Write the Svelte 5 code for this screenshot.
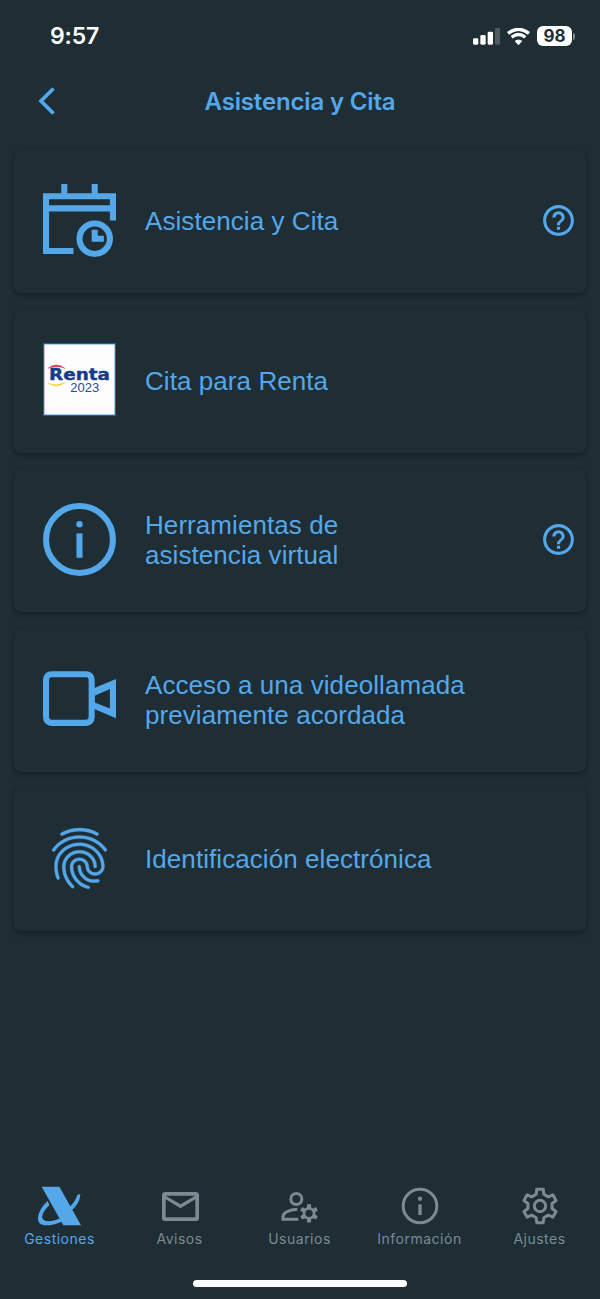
<script lang="ts">
  type Item = {
    icon: string;
    lines: string[];
    help?: boolean;
  };

  const items: Item[] = [
    { icon: 'calendar', lines: ['Asistencia y Cita'], help: true },
    { icon: 'renta', lines: ['Cita para Renta'] },
    { icon: 'info', lines: ['Herramientas de', 'asistencia virtual'], help: true },
    { icon: 'video', lines: ['Acceso a una videollamada', 'previamente acordada'] },
    { icon: 'fingerprint', lines: ['Identificación electrónica'] },
  ];

  const tabs = [
    { id: 'gestiones', name: 'Gestiones' },
    { id: 'avisos', name: 'Avisos' },
    { id: 'usuarios', name: 'Usuarios' },
    { id: 'informacion', name: 'Información' },
    { id: 'ajustes', name: 'Ajustes' },
  ];

  let active = $state('gestiones');

  // six-toothed cog around 0,0
  function gear(outer: number, inner: number, tip: number, base: number) {
    const points: string[] = [];
    for (let i = 0; i < 6; i++) {
      for (const [r, a] of [[inner, -base], [outer, -tip], [outer, tip], [inner, base]]) {
        const angle = ((i * 60 + a - 90) * Math.PI) / 180;
        points.push(`${(r * Math.cos(angle)).toFixed(2)} ${(r * Math.sin(angle)).toFixed(2)}`);
      }
    }
    return `M${points.join('L')}Z`;
  }
</script>

<div class="screen">
  <div class="status">
    <span class="time">9:57</span>
    <div class="indicators">
      <svg class="signal" viewBox="0 0 81 51">
        <rect x="0" y="31" width="16" height="19" rx="4" />
        <rect x="22" y="21" width="16" height="29" rx="4" />
        <rect x="44" y="11" width="16" height="39" rx="4" />
        <rect x="66" y="0" width="15" height="50" rx="4" opacity=".22" />
      </svg>
      <svg class="wifi" viewBox="0 0 69 51">
        <path d="M3 16Q34.500-8 66 16" />
        <path d="M14 28Q34.500 11 55 28" />
        <path class="dot" d="M23 39Q34.500 30 46 39L36.500 49.500Q34.500 52 32.500 49.500Z" />
      </svg>
      <span class="battery">98</span>
      <span class="knob"></span>
    </div>
  </div>

  <header>
    <button class="back" aria-label="Atrás">
      <svg viewBox="0 0 18 30"><path d="M15.500 2.500 3 15l12.500 12.500" /></svg>
    </button>
    <h1>Asistencia y Cita</h1>
  </header>

  <main>
    {#each items as item}
      <div class="card">
        <div class="picture">
          {#if item.icon === 'calendar'}
            <svg viewBox="0 0 24 24">
              <path fill-rule="evenodd" d="M6 0h2v3h8V0h2v3h6v9h-2V9H2v12h8v2H0V3h6zM2 5v2h20V5z" />
              <circle class="line" cx="17" cy="18" r="5" />
              <path d="M16 15h2v2h2v2h-4z" />
            </svg>
          {:else if item.icon === 'renta'}
            <svg class="renta" viewBox="0 0 72 72">
              <rect x=".6" y=".6" width="70.800" height="70.800" />
              <path class="red" d="M5 25Q13 18.500 21.500 25Q13 21.500 5 25Z" />
              <path class="yellow" d="M5 39.500Q13 45.500 22 39Q13 43 5 39.500Z" />
              <text class="brand" x="6" y="36.800" textLength="60" lengthAdjust="spacingAndGlyphs">Renta</text>
              <text class="year" x="27" y="48.500" textLength="28.500" lengthAdjust="spacingAndGlyphs">2023</text>
            </svg>
          {:else if item.icon === 'info'}
            <svg viewBox="0 0 24 24">
              <circle class="line" cx="12" cy="12" r="11" />
              <circle cx="12" cy="7" r="1.050" />
              <path d="M11 10h2v8h-2z" />
            </svg>
          {:else if item.icon === 'video'}
            <svg viewBox="0 0 24 24">
              <rect class="line" x="1" y="4" width="15" height="16" rx="1.800" />
              <path fill-rule="evenodd" d="M16.500 8.700 24 5.600v12.900l-7.500-3.200zM17 11.100v2.200l5 2V8.900z" />
            </svg>
          {:else}
            <svg class="finger" viewBox="0 0 24 24">
              <path d="M17.81 4.47c-.08 0-.16-.02-.23-.06C15.66 3.42 14 3 12.01 3c-1.98 0-3.86.47-5.57 1.41-.24.13-.54.04-.68-.2-.13-.24-.04-.55.2-.68C7.82 2.52 9.86 2 12.01 2c2.13 0 3.99.47 6.03 1.52.25.13.34.43.21.67-.09.18-.26.28-.44.28zM3.5 9.72c-.1 0-.2-.03-.29-.09-.23-.16-.28-.47-.12-.7.99-1.4 2.25-2.5 3.75-3.27C9.98 4.04 14 4.03 17.15 5.65c1.5.77 2.76 1.86 3.75 3.25.16.22.11.54-.12.7-.23.16-.54.11-.7-.12-.9-1.26-2.04-2.25-3.39-2.94-2.87-1.47-6.54-1.47-9.4.01-1.36.7-2.5 1.7-3.4 2.96-.08.14-.23.21-.39.21zm6.25 12.07c-.13 0-.26-.05-.35-.15-.87-.87-1.34-1.43-2.01-2.64-.69-1.23-1.05-2.73-1.05-4.34 0-2.97 2.54-5.39 5.66-5.39s5.66 2.42 5.66 5.39c0 .28-.22.5-.5.5s-.5-.22-.5-.5c0-2.42-2.09-4.39-4.66-4.39-2.57 0-4.66 1.97-4.66 4.39 0 1.44.32 2.77.93 3.85.64 1.15 1.08 1.64 1.85 2.42.19.2.19.51 0 .71-.11.1-.24.15-.37.15zm7.17-1.85c-1.19 0-2.24-.3-3.1-.89-1.49-1.01-2.38-2.65-2.38-4.39 0-.28.22-.5.5-.5s.5.22.5.5c0 1.41.72 2.74 1.94 3.56.71.48 1.54.71 2.54.71.24 0 .64-.03 1.04-.1.27-.05.53.13.58.41.05.27-.13.53-.41.58-.57.11-1.07.12-1.21.12zM14.91 22c-.04 0-.09-.01-.13-.02-1.59-.44-2.63-1.03-3.72-2.1-1.4-1.39-2.17-3.24-2.17-5.22 0-1.62 1.38-2.94 3.08-2.94 1.7 0 3.08 1.32 3.08 2.94 0 1.07.93 1.94 2.08 1.94s2.08-.87 2.08-1.94c0-3.77-3.25-6.83-7.25-6.83-2.84 0-5.44 1.58-6.61 4.03-.39.81-.59 1.76-.59 2.8 0 .78.07 2.01.67 3.61.1.26-.03.55-.29.64-.26.1-.55-.04-.64-.29-.49-1.31-.73-2.61-.73-3.96 0-1.2.23-2.29.68-3.24 1.33-2.79 4.28-4.6 7.51-4.6 4.55 0 8.25 3.51 8.25 7.83 0 1.62-1.38 2.94-3.08 2.94s-3.08-1.32-3.08-2.94c0-1.07-.93-1.94-2.08-1.94s-2.08.87-2.08 1.94c0 1.71.66 3.31 1.87 4.51.95.94 1.86 1.46 3.27 1.85.27.07.42.35.35.61-.05.23-.26.38-.47.38z" />
            </svg>
          {/if}
        </div>
        <p>
          {#each item.lines as line}
            <span>{line}</span>
          {/each}
        </p>
        {#if item.help}
          <button class="help" aria-label="Ayuda">
            <svg viewBox="0 0 24 24">
              <path d="M11 18h2v-2h-2v2zm1-16C6.48 2 2 6.480 2 12s4.480 10 10 10 10-4.480 10-10S17.520 2 12 2zm0 18c-4.410 0-8-3.590-8-8s3.590-8 8-8 8 3.590 8 8-3.590 8-8 8zm0-14c-2.210 0-4 1.790-4 4h2c0-1.100.9-2 2-2s2 .9 2 2c0 2-3 1.750-3 5h2c0-2.250 3-2.500 3-5 0-2.210-1.790-4-4-4z" />
            </svg>
          </button>
        {/if}
      </div>
    {/each}
  </main>

  <nav>
    {#each tabs as tab}
      <button class="tab" class:active={active === tab.id} onclick={() => (active = tab.id)}>
        <svg viewBox="-66 -66 132 132">
          {#if tab.id === 'gestiones'}
            <path d="M-55-58H-2L63 58H10Z" />
            <path d="M61-36Q60-6 32 16L26 5Q46-12 52-33Z" />
            <path d="M-37-15L-32-3Q-57 23-53 36C-48 51-22 47 0 37L5 47C-22 59-50 62-61 52C-74 38-60 5-37-15Z" />
          {:else if tab.id === 'avisos'}
            <path fill-rule="evenodd" d="M-44-42H47Q57-42 57-32V35Q57 45 47 45H-44Q-54 45-54 35V-32Q-54-42-44-42ZM-43-20V34H46V-20L1.500 7ZM-43-31L1.500-5 46-31Z" />
          {:else if tab.id === 'usuarios'}
            <circle class="line" cx="-11" cy="-21" r="16.500" />
            <path class="line" d="M-8 10C-35 11-51 21-51 32V40H-5" />
            <path fill-rule="evenodd" transform="translate(27 22)" d="{gear(28, 19, 12, 20)}M11 0A11 11 0 1 0-11 0A11 11 0 1 0 11 0Z" />
          {:else if tab.id === 'informacion'}
            <circle class="line" r="50.500" />
            <circle cy="-22" r="6.500" />
            <rect x="-5" y="-5" width="10" height="32" />
          {:else}
            <path class="line" d={gear(51, 37, 11, 18)} stroke-linejoin="round" />
            <circle class="line" r="17" />
          {/if}
        </svg>
        <span>{tab.name}</span>
      </button>
    {/each}
  </nav>
  <div class="home"></div>
</div>

<style>
  :global(body) { background: #1f2d35; }
  .screen {
    box-sizing: border-box;
    width: 600px;
    height: 1299px;
    display: flex;
    flex-direction: column;
    background: #1f2d35;
    color: #54a8ea;
    font-family: Inter, sans-serif;
    overflow: hidden;
  }
  button { border: 0; padding: 0; background: none; color: inherit; font: inherit; }
  svg { display: block; fill: currentColor; }
  .line { fill: none; stroke: currentColor; stroke-width: 2; }

  .status {
    height: 72px;
    display: flex;
    justify-content: space-between;
    align-items: center;
    padding: 0 25px 0 50px;
    color: #fff;
  }
  .time { font-size: 23px; font-weight: 600; letter-spacing: -.2px; }
  .indicators { display: flex; align-items: center; }
  .signal { width: 27px; height: 17px; margin-right: 7px; }
  .wifi { width: 23px; height: 17px; margin-right: 7px; }
  .wifi path { fill: none; stroke: currentColor; stroke-width: 10; }
  .wifi .dot { fill: currentColor; stroke: none; }
  .battery {
    width: 35px;
    height: 20px;
    border-radius: 6px;
    background: #fff;
    color: #1f2d35;
    font-size: 17px;
    line-height: 20px;
    font-weight: 700;
    text-align: center;
  }
  .knob { width: 2px; height: 7px; margin-left: 1px; border-radius: 0 3px 3px 0; background: #7b858a; }

  header {
    height: 77px;
    display: grid;
    grid-template-columns: 100px 1fr 100px;
    align-items: start;
  }
  .back { margin: 14px 0 0 38px; width: 18px; }
  .back svg { width: 18px; height: 30px; }
  .back path { fill: none; stroke: currentColor; stroke-width: 3.800; }
  h1 { margin: 15px 0 0; font-size: 24px; line-height: 30px; font-weight: 600; letter-spacing: -.16px; text-align: center; }

  main {
    flex: 1;
    display: flex;
    flex-direction: column;
    gap: 15.500px;
    padding: 0 14px;
  }
  .card {
    height: 144px;
    display: flex;
    align-items: center;
    padding: 0 9px 0 29px;
    border-radius: 7px;
    background: #1f2d35;
    box-shadow: 0 3px 5px rgba(0, 0, 0, 0.2), 0 1px 3px rgba(0, 0, 0, 0.12);
  }
  .picture, .picture svg { width: 73px; height: 73px; }
  .picture { margin: 0 29px 2px 0; }
  .finger { stroke: currentColor; stroke-width: .12; }
  .renta rect { fill: #fdfdfe; stroke: #0f62c4; stroke-width: 1.400; }
  .red { fill: #d9262e; stroke: #d9262e; stroke-width: .4; }
  .yellow { fill: #f3cf20; stroke: #f3cf20; stroke-width: .4; }
  .brand { fill: #163a8c; stroke: #163a8c; stroke-width: .4; font: bold 15.700px "DejaVu Sans", sans-serif; }
  .year { fill: #2b4a97; font: 12.500px "Liberation Sans", sans-serif; }
  p {
    flex: 1;
    margin: 0;
    font: 26px/30px "Liberation Sans", Arial, sans-serif;
    letter-spacing: .07px;
  }
  p span { display: block; }
  .help { margin-bottom: 2px; }
  .help svg { width: 37px; height: 37px; }

  nav { display: flex; height: 96px; }
  .tab {
    width: 120px;
    display: flex;
    flex-direction: column;
    align-items: center;
    color: #7b8a93;
  }
  .tab.active { color: #54a8ea; }
  .tab svg { width: 44px; height: 44px; }
  .tab .line { stroke-width: 9; }
  .tab span { margin: 2px 1px 0 0; font-size: 14px; line-height: 18px; letter-spacing: .5px; }
  .home { width: 214px; height: 7px; margin: 0 auto 12px; border-radius: 4px; background: #fff; }
</style>
